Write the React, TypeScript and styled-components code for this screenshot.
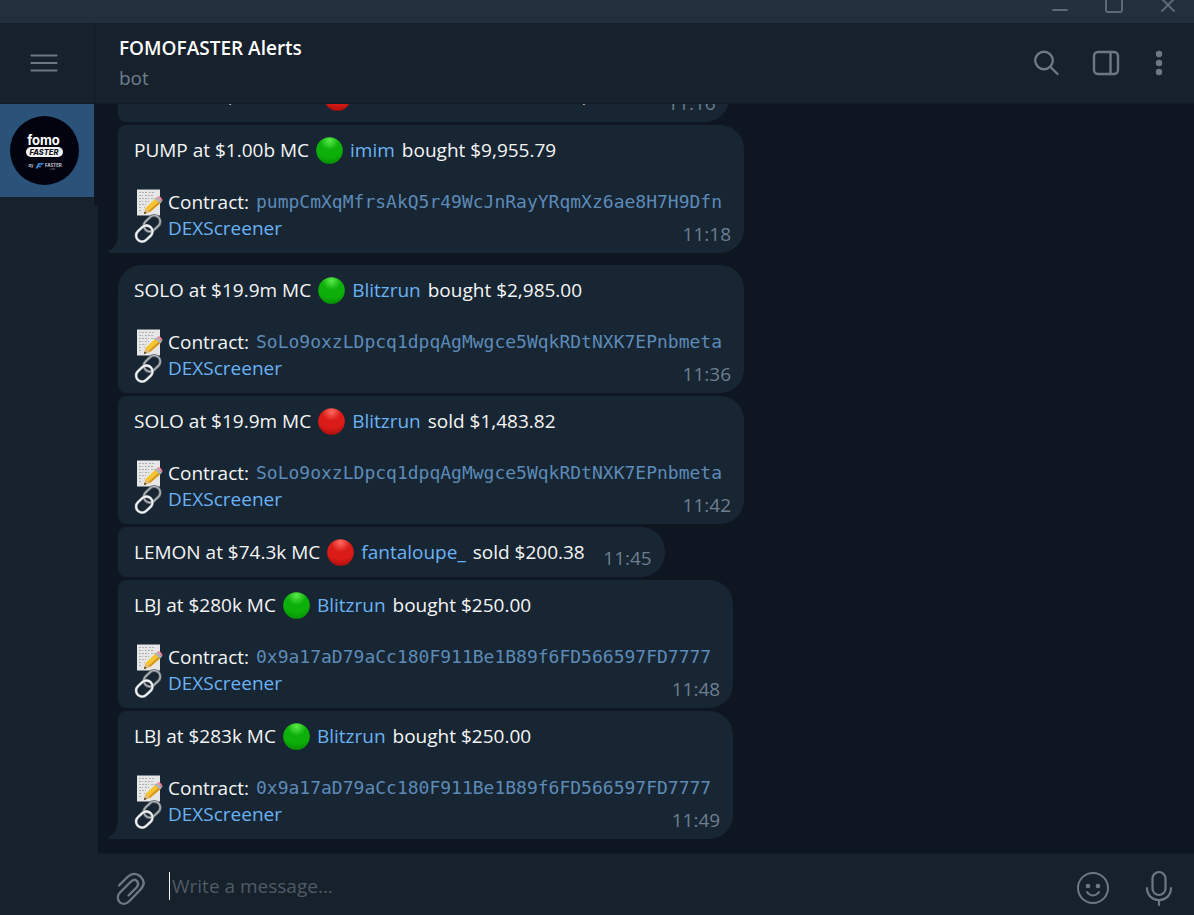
import React from 'react';
import styled, { createGlobalStyle, css } from 'styled-components';

const Global = createGlobalStyle`
  *, *::before, *::after { box-sizing: border-box; }
  body { margin: 0; background: #0e1621; font-family: 'Open Sans', 'Noto Sans', sans-serif; color: #f5f5f5; }
  button { border: 0; padding: 0; background: none; color: inherit; font: inherit; cursor: pointer; }
`;

const Shell = styled.div`
  display: flex;
  flex-direction: column;
  height: 100vh;
  overflow: hidden;
`;

const TitleBar = styled.div`
  display: flex;
  flex: none;
  justify-content: flex-end;
  align-items: flex-end;
  gap: 30px;
  height: 23px;
  padding: 0 14px 8px 0;
  background: #242f3d;
  color: #5b6978;
`;

const WindowButton = styled.button`
  display: flex;
  width: 24px;
  height: 20px;
`;

const Header = styled.header`
  display: flex;
  flex: none;
  height: 81px;
  background: #17212b;
  border-bottom: 1px solid #121a23;
`;

const MenuCell = styled.div`
  display: flex;
  flex: none;
  align-items: center;
  justify-content: center;
  width: 95px;
  padding-right: 6px;
  border-right: 1px solid #101921;
  color: #6c7883;
`;

const ChatInfo = styled.div`
  flex: 1;
  padding: 12px 0 0 24px;
`;

const ChatName = styled.h1`
  margin: 0;
  font-size: 19px;
  line-height: 26px;
  font-weight: 600;
  color: #ffffff;
`;

const ChatStatus = styled.p`
  margin: 4px 0 0;
  font-size: 19px;
  line-height: 26px;
  color: #6d7f8f;
`;

const HeaderActions = styled.div`
  display: flex;
  align-items: center;
  gap: 28px;
  padding-right: 26px;
  color: #6c7883;
`;

const IconButton = styled.button<{ $narrow?: boolean }>`
  display: flex;
  align-items: center;
  justify-content: center;
  width: ${(p) => (p.$narrow ? '18px' : '32px')};
  height: 36px;
`;

const Body = styled.div`
  display: flex;
  flex: 1;
  min-height: 0;
`;

const Sidebar = styled.nav`
  flex: none;
  width: 98px;
  background: #17212b;
`;

const ChatListTop = styled.div`
  height: 102px;
  background: #17212b;
  border-right: 4px solid #0e1621;
`;

const ChatItem = styled.button`
  display: flex;
  align-items: center;
  width: 94px;
  height: 93px;
  padding-left: 10px;
  background: #2b5278;
`;

const Main = styled.main`
  display: flex;
  flex: 1;
  flex-direction: column;
  min-width: 0;
`;

const Messages = styled.section`
  display: flex;
  flex: 1;
  flex-direction: column;
  justify-content: flex-end;
  align-items: flex-start;
  gap: 12px;
  min-height: 0;
  overflow: hidden;
  padding: 0 20px 14px;
`;

const Group = styled.div`
  display: flex;
  flex-direction: column;
  align-items: flex-start;
  gap: 3px;
`;

const Bubble = styled.article<{ $first?: boolean; $tail?: boolean; $compact?: boolean }>`
  position: relative;
  padding: 12px ${(p) => (p.$compact ? '80px' : '16px')} 12px 16px;
  border-radius: ${(p) => (p.$first ? '24px' : '8px')} 24px 24px ${(p) => (p.$tail ? '0' : '8px')};
  background: #182533;
  font-size: 19px;
  line-height: 26px;
  white-space: nowrap;
  ${(p) =>
    p.$tail &&
    css`
      &::before {
        content: '';
        position: absolute;
        right: 100%;
        bottom: 0;
        width: 9px;
        height: 16px;
        background: radial-gradient(circle 16px at -7px 0, transparent 15px, #182533 16px);
      }
    `}
`;

const Line = styled.p`
  display: flex;
  align-items: center;
  gap: 7px;
  height: 26px;
  margin: 0;
`;

const Details = styled.div`
  padding-top: 26px;
`;

const Link = styled.a`
  color: #6ab3f3;
  text-decoration: none;
`;

const Code = styled.code`
  padding-right: 6px;
  font-family: 'DejaVu Sans Mono', 'Liberation Mono', monospace;
  font-size: 18px;
  line-height: 26px;
  color: #5c8bb8;
`;

const Time = styled.time`
  position: absolute;
  right: 13px;
  bottom: 6px;
  color: #6d7f8f;
`;

const Composer = styled.form`
  display: flex;
  flex: none;
  align-items: center;
  height: 62px;
  padding: 6px 19px 0 17px;
  background: #17212b;
  border-top: 1px solid #121a23;
  color: #6c7883;
`;

const MessageInput = styled.input`
  flex: 1;
  min-width: 0;
  height: 28px;
  margin: 0 0 4px 22px;
  padding: 0 2px;
  border: 0;
  border-left: 1px solid #f5f5f5;
  outline: 0;
  background: transparent;
  color: #f5f5f5;
  font: inherit;
  font-size: 19px;
  &::placeholder { color: #4e5a66; opacity: 1; }
`;

const ComposerActions = styled.div`
  display: flex;
  gap: 34px;
`;

const Svg = styled.svg`
  display: block;
  flex: none;
  overflow: visible;
`;

const stroke = { fill: 'none', stroke: 'currentColor', strokeWidth: 2, strokeLinecap: 'round', strokeLinejoin: 'round' } as const;

function Orb({ tone }: { tone: 'green' | 'red' }) {
  const id = `orb-${tone}`;
  const [a, b, c] = tone === 'green' ? ['#5bea4c', '#0cb008', '#078d05'] : ['#ff6a60', '#da1b17', '#a80f0c'];
  return (
    <Svg width="27" height="28" viewBox="0 0 27 28" aria-hidden="true">
      <defs>
        <radialGradient id={id} cx="0.5" cy="0.12" r="0.9">
          <stop offset="0" stopColor={a} />
          <stop offset="0.4" stopColor={b} />
          <stop offset="0.7" stopColor={b} />
          <stop offset="1" stopColor={c} />
        </radialGradient>
      </defs>
      <circle cx="13.5" cy="14.5" r="13.3" fill={`url(#${id})`} />
    </Svg>
  );
}

function Memo() {
  return (
    <Svg width="27" height="28" viewBox="0 0 27 28" aria-hidden="true">
      <path d="M3 1.500h23v26H3z" fill="#e6e6e6" />
      <path d="M5 4.500h8m2 0h5M5 7.500h4m2 0h9M5 10.500h10m2 0h5M5 13.500h4m2 0h4M5 16.500h7M5 19.500h3m2 0h1M5 22.500h3" stroke="#a8abae" strokeWidth="0.9" fill="none" strokeDasharray="2 1" />
      <path d="M10 26l1.500-6L22 10l5 4.500L16 24z" fill="#f6c42f" />
      <path d="M14 23.500L25.500 13l1.500 1.500L16 24z" fill="#d4921d" />
      <path d="M10 26l1.500-6 4.500 4z" fill="#e2b878" />
      <path d="M10 26l.7-2.600 1.800 1.700z" fill="#2b2b2b" />
      <path d="M21 11l2-2 5 4.500-2 2z" fill="#a9b4bd" />
      <path d="M23 9q2-1.500 4 .500 2 2 1 4z" fill="#ee8494" />
    </Svg>
  );
}

function Chain() {
  return (
    <Svg width="27" height="28" viewBox="0 0 27 28" aria-hidden="true">
      <g fill="none" transform="rotate(-43 14 14)">
        <rect x="11" y="7.500" width="18" height="12" rx="6" stroke="#6f767c" strokeWidth="2.8" />
        <rect x="11" y="7.500" width="18" height="12" rx="6" stroke="#b9bdc0" strokeWidth="1.200" />
        <rect x="-1.500" y="9.500" width="18" height="12" rx="6" stroke="#9da3a8" strokeWidth="2.8" />
        <rect x="-1.500" y="9.500" width="18" height="12" rx="6" stroke="#f2f3f4" strokeWidth="1.800" />
      </g>
    </Svg>
  );
}

function Avatar() {
  return (
    <Svg width="69" height="69" viewBox="0 0 69 69" aria-hidden="true">
      <circle cx="34.5" cy="34.5" r="34.5" fill="#02030f" />
      <text x="33.5" y="29" textAnchor="middle" fontFamily="Inter, sans-serif" fontSize="13" fontWeight="700" fill="#fff">fomo</text>
      <rect x="16" y="31" width="37" height="10" rx="5" fill="#f4f4f6" />
      <text x="34" y="38.8" textAnchor="middle" fontFamily="Inter, sans-serif" fontSize="7.5" fontWeight="800" fontStyle="italic" fill="#11131c">FASTER</text>
      <text x="18.5" y="51.2" fontFamily="Inter, sans-serif" fontSize="4" fontWeight="600" fill="#d6d9df">by</text>
      <path d="M28 47h6l-1.300 1.800h-3l-.6 1h2.600l-1 1.400h-2.400l-.7 1.300h-2z" fill="#2e7fc6" />
      <text x="35" y="51" fontFamily="Inter, sans-serif" fontSize="4.4" fontWeight="700" fill="#c8ccd4">FASTER</text>
      <text x="40" y="54" fontFamily="Inter, sans-serif" fontSize="2" fill="#8d929c">LABS</text>
    </Svg>
  );
}

type Message = {
  token: string;
  tone: 'green' | 'red';
  trader: string;
  action: string;
  contract?: string;
  time: string;
};

const groups: Message[][] = [
  [
    { token: 'HOUSE at $74.3k MC', tone: 'red', trader: 'moonwatcherclub2', action: 'sold $200.38', time: '11:16' },
    { token: 'PUMP at $1.00b MC', tone: 'green', trader: 'imim', action: 'bought $9,955.79', contract: 'pumpCmXqMfrsAkQ5r49WcJnRayYRqmXz6ae8H7H9Dfn', time: '11:18' },
  ],
  [
    { token: 'SOLO at $19.9m MC', tone: 'green', trader: 'Blitzrun', action: 'bought $2,985.00', contract: 'SoLo9oxzLDpcq1dpqAgMwgce5WqkRDtNXK7EPnbmeta', time: '11:36' },
    { token: 'SOLO at $19.9m MC', tone: 'red', trader: 'Blitzrun', action: 'sold $1,483.82', contract: 'SoLo9oxzLDpcq1dpqAgMwgce5WqkRDtNXK7EPnbmeta', time: '11:42' },
    { token: 'LEMON at $74.3k MC', tone: 'red', trader: 'fantaloupe_', action: 'sold $200.38', time: '11:45' },
    { token: 'LBJ at $280k MC', tone: 'green', trader: 'Blitzrun', action: 'bought $250.00', contract: '0x9a17aD79aCc180F911Be1B89f6FD566597FD7777', time: '11:48' },
    { token: 'LBJ at $283k MC', tone: 'green', trader: 'Blitzrun', action: 'bought $250.00', contract: '0x9a17aD79aCc180F911Be1B89f6FD566597FD7777', time: '11:49' },
  ],
];

function Alert({ message, first, tail }: { message: Message; first: boolean; tail: boolean }) {
  return (
    <Bubble $first={first} $tail={tail} $compact={!message.contract}>
      <Line>
        <span>{message.token}</span>
        <Orb tone={message.tone} />
        <Link href="#trader">{message.trader}</Link>
        <span>{message.action}</span>
      </Line>
      {message.contract && (
        <Details>
          <Line>
            <Memo />
            <span>Contract:</span>
            <Code>{message.contract}</Code>
          </Line>
          <Line>
            <Chain />
            <Link href="#dexscreener">DEXScreener</Link>
          </Line>
        </Details>
      )}
      <Time>{message.time}</Time>
    </Bubble>
  );
}

export default function App() {
  return (
    <Shell>
      <Global />
      <TitleBar>
        <WindowButton aria-label="Minimize">
          <Svg width="24" height="20" viewBox="0 0 24 20"><path {...stroke} d="M5 15h14" /></Svg>
        </WindowButton>
        <WindowButton aria-label="Maximize">
          <Svg width="24" height="20" viewBox="0 0 24 20"><rect {...stroke} x="4" y="2" width="16" height="15" rx="2" /></Svg>
        </WindowButton>
        <WindowButton aria-label="Close">
          <Svg width="24" height="20" viewBox="0 0 24 20"><path {...stroke} d="M6 4l12 12M18 4L6 16" /></Svg>
        </WindowButton>
      </TitleBar>
      <Header>
        <MenuCell>
          <IconButton aria-label="Menu">
            <Svg width="28" height="20" viewBox="0 0 28 20"><path {...stroke} d="M1.500 2.500h25M1.500 10h25M1.500 17.500h25" strokeWidth={2.2} /></Svg>
          </IconButton>
        </MenuCell>
        <ChatInfo>
          <ChatName>FOMOFASTER Alerts</ChatName>
          <ChatStatus>bot</ChatStatus>
        </ChatInfo>
        <HeaderActions>
          <IconButton aria-label="Search">
            <Svg width="26" height="26" viewBox="0 0 26 26"><g {...stroke} strokeWidth={2.4}><circle cx="11" cy="10.5" r="8.8" /><path d="M17.500 17l7 7" /></g></Svg>
          </IconButton>
          <IconButton aria-label="Toggle info panel">
            <Svg width="28" height="26" viewBox="0 0 28 26"><g {...stroke} strokeWidth={2.4}><rect x="2" y="2" width="24" height="22" rx="4" /><path d="M18.500 2v22" /></g></Svg>
          </IconButton>
          <IconButton aria-label="More" $narrow>
            <Svg width="8" height="26" viewBox="0 0 8 26"><g fill="currentColor"><circle cx="4" cy="4" r="3.2" /><circle cx="4" cy="13" r="3.2" /><circle cx="4" cy="22" r="3.2" /></g></Svg>
          </IconButton>
        </HeaderActions>
      </Header>
      <Body>
        <Sidebar>
          <ChatListTop>
            <ChatItem aria-label="FOMOFASTER Alerts"><Avatar /></ChatItem>
          </ChatListTop>
        </Sidebar>
        <Main>
          <Messages>
            {groups.map((group, g) => (
              <Group key={g}>
                {group.map((m, i) => (
                  <Alert key={m.time} message={m} first={i === 0} tail={i === group.length - 1} />
                ))}
              </Group>
            ))}
          </Messages>
          <Composer>
            <IconButton type="button" aria-label="Attach file">
              <Svg width="28" height="32" viewBox="0 0 28 32">
                <path {...stroke} strokeWidth={2.4} d="M2 13.500L10.500 5C14.500 1 19.500 1 23.500 4.500C27.500 8.500 27.500 13 24 17L12.500 29C9 32.500 5 32.500 2.500 30C0 27 .5 23 3 20.500L13.500 10C16 7.500 18.500 7.500 20 9C21.500 11 21.500 13 20 15L11.500 23.500" />
              </Svg>
            </IconButton>
            <MessageInput aria-label="Write a message" placeholder="Write a message..." />
            <ComposerActions>
              <IconButton type="button" aria-label="Emoji">
                <Svg width="32" height="32" viewBox="0 0 32 32"><circle {...stroke} cx="16" cy="16" r="15" /><circle cx="11" cy="14" r="2.3" fill="currentColor" /><circle cx="21" cy="14" r="2.3" fill="currentColor" /><path {...stroke} d="M10 20c3 4.500 9 4.500 12 0" /></Svg>
              </IconButton>
              <IconButton type="button" aria-label="Record voice message">
                <Svg width="28" height="36" viewBox="0 0 28 36"><g {...stroke} strokeWidth={2.2}><rect x="7.500" y="2" width="13" height="23" rx="6.500" /><path d="M2 18c0 7 5 12 12 12s12-5 12-12M14 30v5" /></g></Svg>
              </IconButton>
            </ComposerActions>
          </Composer>
        </Main>
      </Body>
    </Shell>
  );
}
